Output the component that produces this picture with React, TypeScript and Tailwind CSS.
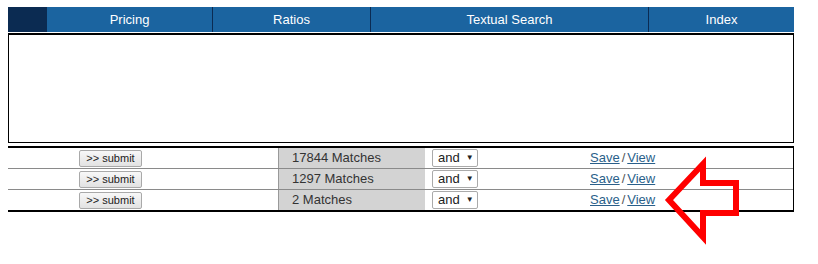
import React from "react";

const rows = ["17844 Matches", "1297 Matches", "2 Matches"];

export default function App() {
  return (
    <div
      className="relative w-[818px] h-[264px] bg-white px-2 pt-[7px] text-[13px] text-[#333]"
      style={{ fontFamily: '"Liberation Sans", Arial, sans-serif' }}
    >
      {/* Header */}
      <div className="flex h-[25px] w-[786px] text-white leading-[25px]">
        <div className="w-[39px] bg-[#0b2b52]" />
        <div className="w-[165px] bg-[#1b64a0] text-center">Pricing</div>
        <div className="w-[1px] bg-[#0b2b52]" />
        <div className="w-[157px] bg-[#1b64a0] text-center">Ratios</div>
        <div className="w-[1px] bg-[#0b2b52]" />
        <div className="w-[277px] bg-[#1b64a0] text-center">Textual Search</div>
        <div className="w-[1px] bg-[#0b2b52]" />
        <div className="flex-1 bg-[#1b64a0] text-center">Index</div>
      </div>

      {/* Empty box */}
      <div className="mt-[1px] h-[110px] w-[786px] border border-black border-t-2" />

      {/* Results table */}
      <div className="mt-[3px] w-[786px] border-t-2 border-b-2 border-r border-black">
        {rows.map((r, i) => (
          <div
            key={i}
            className={`flex items-center ${i > 0 ? "h-[21px] border-t border-[#8a8a8a]" : "h-[20px]"}`}
          >
            <div className="flex w-[205px] justify-center">
              <button className="h-[17px] w-[63px] rounded-[2px] border border-[#a9a9a9] bg-gradient-to-b from-[#f8f8f8] to-[#e2e2e2] text-[11px] leading-[15px] text-[#222]">
                &gt;&gt; submit
              </button>
            </div>
            <div className="w-[65px]" />
            <div className="flex h-full w-[147px] items-center border-l border-[#999] bg-[#d3d3d3] pl-[13px] text-[13px] text-[#333]">
              {r}
            </div>
            <div className="flex h-full w-[165px] items-center pl-[7px]">
              <div className="flex h-[18px] w-[46px] items-center rounded-[2px] border border-[#aaa] bg-white pl-[5px] text-[13px] text-[#222]">
                and<span className="ml-[6px] text-[8px]">▼</span>
              </div>
            </div>
            <div className="flex-1 text-[13px]">
              <a className="text-[#2a5f8a] underline" href="#">Save</a>
              <span className="mx-[2px] text-[#555]">/</span>
              <a className="text-[#2a5f8a] underline" href="#">View</a>
            </div>
          </div>
        ))}
      </div>

      {/* Red arrow annotation */}
      <svg
        className="absolute left-0 top-0 pointer-events-none"
        width="818"
        height="264"
        viewBox="0 0 818 264"
      >
        <polygon
          points="669,200 703,164 703,183 736,183 736,213 703,213 703,237"
          fill="none"
          stroke="#ff0000"
          strokeWidth="6"
          strokeLinejoin="miter"
          strokeMiterlimit="10"
        />
      </svg>
    </div>
  );
}
